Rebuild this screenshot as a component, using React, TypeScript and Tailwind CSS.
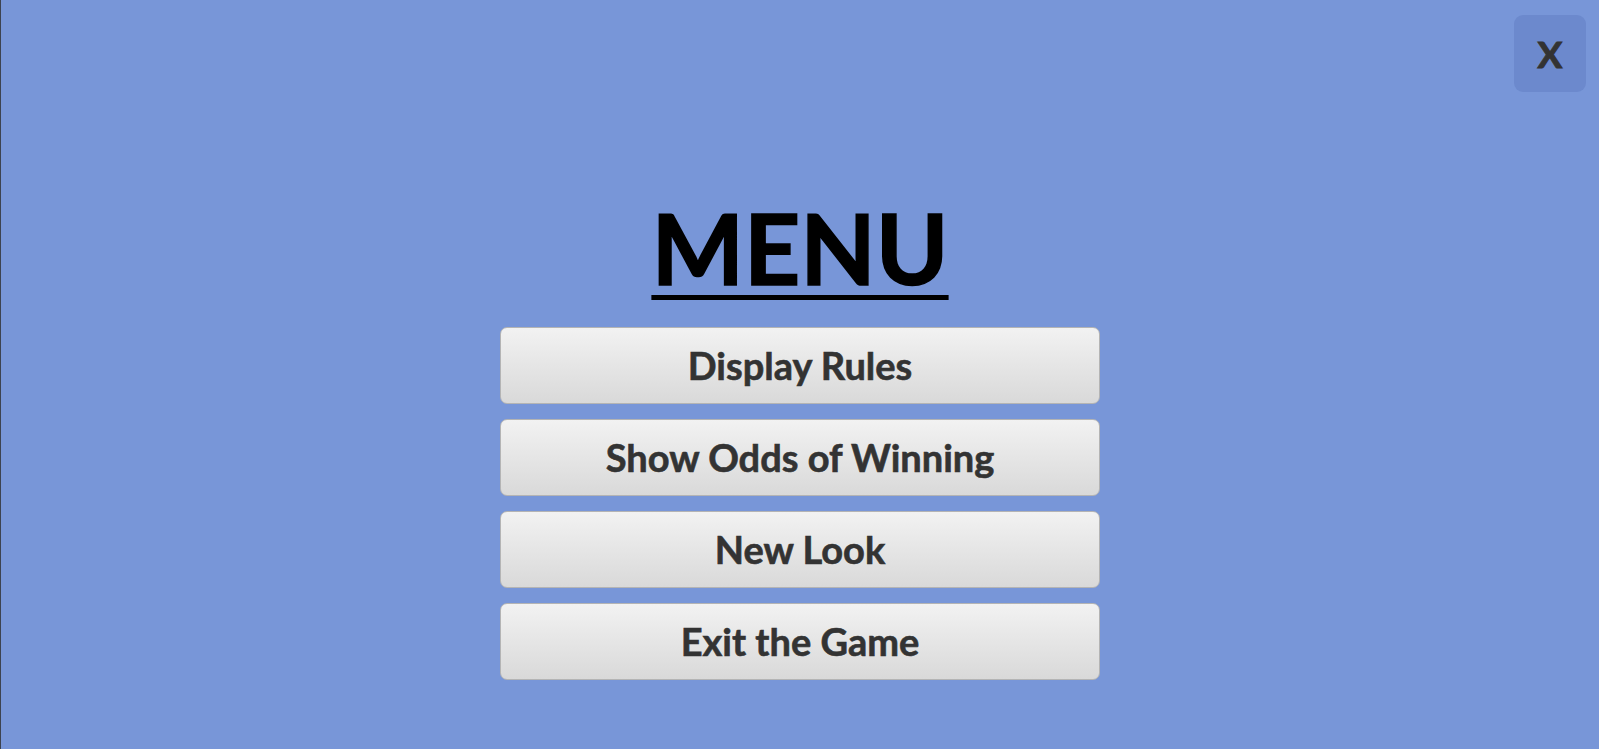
const items = ["Display Rules", "Show Odds of Winning", "New Look", "Exit the Game"];

export default function App() {
	return (
		<div
			className="relative flex h-screen w-full flex-col items-center border-l border-[#3d4350] bg-[#7896d8]"
			style={{ fontFamily: "Lato, 'Open Sans', sans-serif" }}
		>
			<button className="absolute right-[13px] top-[15px] flex h-[77px] w-[72px] items-center justify-center rounded-[9px] bg-[#6c89cd] text-[37px] font-bold text-[#333333] [-webkit-text-stroke:1px_#333333]">
				X
			</button>

			<h1 className="mt-[198px] text-[98px] font-bold leading-none text-black underline decoration-[5px] underline-offset-[10px] [-webkit-text-stroke:1.5px_#000000]">
				MENU
			</h1>

			<div className="mt-[31px] flex flex-col gap-[15px]">
				{items.map((label) => (
					<button
						key={label}
						className="flex h-[77px] w-[600px] items-center justify-center rounded-[7px] border border-[#b4b4b4] bg-gradient-to-b from-[#f2f2f2] to-[#d9d9d9] text-[38px] font-bold text-[#333333] [-webkit-text-stroke:0.6px_#333333]"
					>
						{label}
					</button>
				))}
			</div>
		</div>
	);
}
